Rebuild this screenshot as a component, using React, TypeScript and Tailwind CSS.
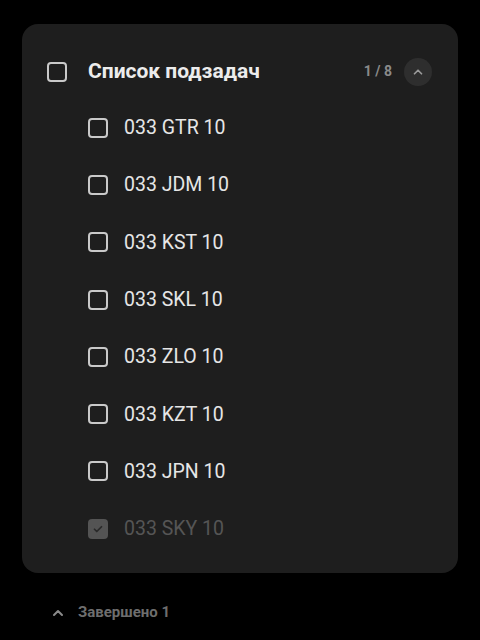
const items = ['033 GTR 10', '033 JDM 10', '033 KST 10', '033 SKL 10', '033 ZLO 10', '033 KZT 10', '033 JPN 10']

function Box() {
  return <span className="w-[20px] h-[20px] rounded-[4px] border-2 border-[#c9c9c9] shrink-0" />
}

function Chevron({ className }: { className: string }) {
  return (
    <svg viewBox="0 0 24 24" className={className} fill="none" stroke="currentColor" strokeWidth="3" strokeLinecap="round" strokeLinejoin="round">
      <path d="M6 15l6-6 6 6" />
    </svg>
  )
}

export default function App() {
  return (
    <div className="w-[480px] h-[640px] bg-black pt-[24px] px-[22px] font-['Roboto',sans-serif]">
      <div className="bg-[#1e1e1e] rounded-[16px] pt-[20px] pb-[16px] pl-[25px] pr-[26px]">
        <div className="h-[55px] flex items-center">
          <Box />
          <span className="ml-[21px] text-[21px] font-bold text-[#ececec]">Список подзадач</span>
          <span className="ml-auto text-[14px] font-bold text-[#8a8a8a]">1 / 8</span>
          <span className="ml-[12px] w-[28px] h-[28px] rounded-full bg-[#2e2e2e] flex items-center justify-center">
            <Chevron className="w-[14px] h-[14px] text-[#9a9a9a]" />
          </span>
        </div>
        {items.map((t) => (
          <div key={t} className="h-[57.3px] flex items-center pl-[41px]">
            <Box />
            <span className="ml-[16px] text-[19.5px] text-[#e6e6e6]">{t}</span>
          </div>
        ))}
        <div className="h-[57.3px] flex items-center pl-[41px]">
          <span className="w-[20px] h-[20px] rounded-[4px] bg-[#545454] flex items-center justify-center">
            <svg viewBox="0 0 24 24" className="w-[12px] h-[12px]" fill="none" stroke="#2a2a2a" strokeWidth="3.5" strokeLinecap="round" strokeLinejoin="round">
              <path d="M5 12.5l4.5 4.5L19 7.5" />
            </svg>
          </span>
          <span className="ml-[16px] text-[19.5px] text-[#555555]">033 SKY 10</span>
        </div>
      </div>
      <div className="flex items-center mt-[28px] pl-[28px]">
        <Chevron className="w-[16px] h-[16px] text-[#8a8a8a]" />
        <span className="ml-[12px] text-[15px] font-bold text-[#6e6e6e]">Завершено 1</span>
      </div>
    </div>
  )
}
